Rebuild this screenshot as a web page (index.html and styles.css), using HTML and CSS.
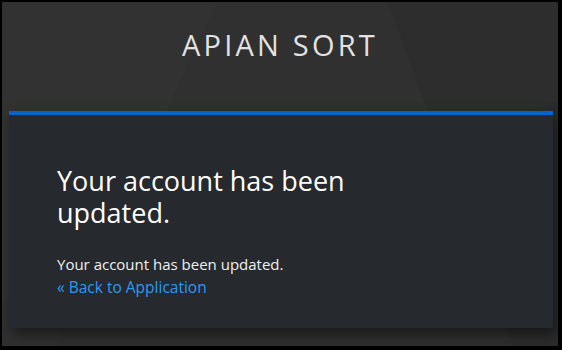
FILE: index.html
```html
<!DOCTYPE html>
<html lang="en">
<head>
    <meta charset="UTF-8">
    <meta name="viewport" content="width=device-width, initial-scale=1.0">
    <title>Apian Sort - Account updated</title>
    <link rel="stylesheet" href="styles.css">
</head>
<body>
    <div class="login-pf-page">
        <div class="login-header">
            <div class="login-title">APIAN SORT</div>
        </div>
        <div class="card-pf">
            <h1 class="page-title">Your account has been updated.</h1>
            <p class="instruction">Your account has been updated.</p>
            <a class="back-link" href="#">&laquo; Back to Application</a>
        </div>
    </div>
</body>
</html>
```

FILE: styles.css
```css
html, body {
    margin: 0;
    background: #000;
}
body {
    padding: 2px 4px 4px 2px;
    width: 556px;
    height: 344px;
    overflow: hidden;
}
.login-pf-page {
    width: 556px;
    height: 344px;
    background:
        linear-gradient(115deg, rgba(255,255,255,0.012) 0 30%, transparent 30%),
        linear-gradient(250deg, rgba(0,0,0,0.07) 0 25%, transparent 25%),
        linear-gradient(160deg, rgba(255,255,255,0.01) 0 55%, transparent 55%),
        #2e2e2e;
    display: flex;
    flex-direction: column;
}
.login-header {
    height: 109px;
    display: flex;
    align-items: center;
    justify-content: center;
}
.login-title {
    font-family: "Open Sans", "Liberation Sans", sans-serif;
    font-weight: 400;
    font-size: 29px;
    letter-spacing: 3.2px;
    color: #e2e2e2;
    margin-top: -24px;
}
.card-pf {
    margin: 0 5px 0 7px;
    height: 217px;
    box-sizing: border-box;
    background: #26292d;
    border-top: 4px solid #0066cc;
    padding: 50px 48px 0;
    box-shadow: 3px 6px 12px rgba(0,0,0,0.45);
    font-family: "Open Sans", "Liberation Sans", sans-serif;
}
.page-title {
    margin: 0;
    font-size: 27px;
    font-weight: 500;
    line-height: 32px;
    color: #fff;
    width: 300px;
}
.instruction {
    margin: 24px 0 0;
    font-size: 15px;
    line-height: 23px;
    color: #f0f0f0;
}
.back-link {
    display: block;
    font-size: 15.5px;
    line-height: 23px;
    color: #2b9af3;
    text-decoration: none;
}
```
